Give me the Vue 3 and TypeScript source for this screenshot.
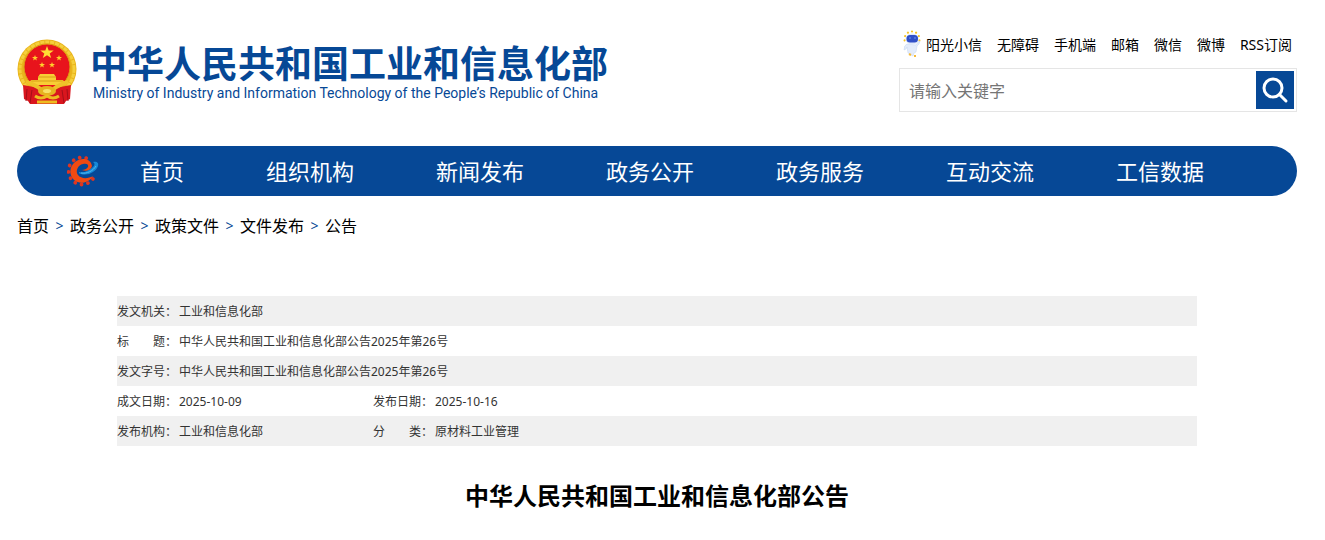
<script setup lang="ts">
import { ref } from 'vue'

interface Field {
  label: string
  value: string
}

const keyword = ref('')
const tools: string[] = ['无障碍', '手机端', '邮箱', '微信', '微博', 'RSS订阅']
const menu: string[] = ['首页', '组织机构', '新闻发布', '政务公开', '政务服务', '互动交流', '工信数据']
const crumbs: string[] = ['首页', '政务公开', '政策文件', '文件发布', '公告']
const rows: Field[][] = [
  [{ label: '发文机关：', value: '工业和信息化部' }],
  [{ label: '标　　题：', value: '中华人民共和国工业和信息化部公告2025年第26号' }],
  [{ label: '发文字号：', value: '中华人民共和国工业和信息化部公告2025年第26号' }],
  [{ label: '成文日期：', value: '2025-10-09' }, { label: '发布日期：', value: '2025-10-16' }],
  [{ label: '发布机构：', value: '工业和信息化部' }, { label: '分　　类：', value: '原材料工业管理' }],
]
const teeth: number[] = [36, 64, 92, 120, 148, 176, 204, 232, 260, 288]
const rays: number[] = [-100, -67, -33, 0, 33, 67, 100]
</script>

<template>
  <div class="page">
    <header class="header">
      <a class="brand" href="#">
        <svg class="emblem" viewBox="0 0 60 66" aria-hidden="true">
          <circle cx="30" cy="30" r="29.5" fill="#e9b41c" />
          <circle cx="30" cy="30" r="27" fill="none" stroke="#f5cf3c" stroke-width="3" stroke-dasharray="4 1" />
          <circle cx="30" cy="28" r="23" fill="#e8141c" stroke="#dda014" stroke-width="1" />
          <path fill="#ffdc34" d="M30 7l1.700 4.500h5l-4 3 1.500 4.500-4.200-2.800-4.200 2.800 1.500-4.500-4-3h5z" />
          <path fill="#ffcf2c" d="M18 16l.8 2h2.200l-1.800 1.400.7 2.200-1.900-1.300-1.900 1.300.7-2.200-1.800-1.400h2.200zM42 16l.8 2H45l-1.800 1.400.7 2.200-1.900-1.300-1.900 1.300.7-2.200-1.800-1.400h2.200zM25 23l.8 2H28l-1.800 1.400.7 2.200-1.900-1.300-1.900 1.300.7-2.200-1.800-1.400h2.200zM35 23l.8 2H38l-1.800 1.400.7 2.200-1.900-1.300-1.900 1.300.7-2.200-1.800-1.400h2.200z" />
          <path fill="#f8cf35" d="M23 35h14l2 3v3h7l3 5H11l3-5h7v-3z" />
          <path d="M21 38h18M14 42h32" stroke="#d99d18" stroke-width="1" />
          <path fill="#d9161e" d="M6 46l16 3 8 8 8-8 16-3-1 14-4 2-2 3H13l-2-3-4-2z" />
          <path d="M10 50l-1 12M15 51l-2 13M45 51l2 13M50 50l1 12" stroke="#a50f18" stroke-width="1" />
          <path fill="none" stroke="#efc129" stroke-width="4" d="M9 43q12 3 21 13 9-10 21-13" />
          <ellipse cx="30" cy="52" rx="9" ry="5" fill="#e6b31f" />
          <ellipse cx="30" cy="52" rx="4" ry="2" fill="#f9e065" />
          <path fill="none" stroke="#edbc20" stroke-width="3" d="M18 57q6 4 12 0 6 4 12 0M20 63h20" />
        </svg>
        <span class="names">
          <span class="name-zh">中华人民共和国工业和信息化部</span>
          <span class="name-en">Ministry of Industry and Information Technology of the People’s Republic of China</span>
        </span>
      </a>

      <div class="side">
        <nav class="tools" aria-label="快捷入口">
          <a class="helper" href="#">
            <svg class="robot" viewBox="0 0 18 28" aria-hidden="true">
              <circle v-for="angle in rays" :key="angle" cx="9" cy="1.500" r="1.100" fill="#f6c52a" :transform="`rotate(${angle} 9 9)`" />
              <path fill="#e3ecfb" stroke="#c3d4f0" stroke-width=".5" d="M4 14Q1 15 1 20l2-1 1-2 1 6 3 2 2 1 1-3 2-1 1-6 2-2 1-3-2 1-2 3z" />
              <ellipse cx="9" cy="9" rx="6.500" ry="5.500" fill="#dfe9fa" />
              <rect x="3.500" y="5" width="11.500" height="7.500" rx="3.500" fill="#304fc7" />
              <path d="M6 8h2M11 8h2" stroke="#6a95f0" stroke-width="1" />
              <path d="M6 24l2 1M11 26h2" stroke="#f5bb3c" stroke-width="2" />
            </svg>
            阳光小信
          </a>
          <a v-for="item in tools" :key="item" href="#">{{ item }}</a>
        </nav>
        <form class="search" role="search" @submit.prevent>
          <input v-model="keyword" type="text" placeholder="请输入关键字" aria-label="请输入关键字" />
          <button type="submit" aria-label="搜索">
            <svg viewBox="0 0 38 38" aria-hidden="true">
              <circle cx="17" cy="17" r="9" fill="none" stroke="#fff" stroke-width="3" />
              <path d="M23.500 23.500L30 30" stroke="#fff" stroke-width="3" stroke-linecap="round" />
            </svg>
          </button>
        </form>
      </div>
    </header>

    <nav class="menu" aria-label="主导航">
      <svg class="gear" viewBox="0 0 32 32" aria-hidden="true">
        <circle v-for="angle in teeth" :key="angle" cx="15" cy="2.500" r="1.900" fill="#df3520" :transform="`rotate(${angle + 90} 15 16)`" />
        <path fill="#f04a12" d="M25 11C24 3 14 2 8 7 2 12 2 20 7 25c6 5 15 3 19-4-5 3-12 3-15-1-3-4 0-10 5-11 3-1 6 0 5 3-1 2-4 3-6 3 5 2 9 0 10-4z" />
        <path fill="#1489d8" d="M12 17c5 1 10-1 14-5 2-2 2-4 0-5 4-1 6 1 5 4-2 6-10 10-17 8-2 0-2-1-2-2z" />
        <path fill="none" stroke="#55b8ed" stroke-width="1" d="M14 18c6 1 12-2 15-7" />
      </svg>
      <a v-for="item in menu" :key="item" href="#">{{ item }}</a>
    </nav>

    <nav class="crumbs" aria-label="当前位置">
      <template v-for="(item, index) in crumbs" :key="item">
        <span v-if="index > 0" class="sep">&gt;</span>
        <a href="#">{{ item }}</a>
      </template>
    </nav>

    <main class="article">
      <table class="meta">
        <colgroup>
          <col class="col-label" />
          <col class="col-value" />
          <col class="col-label" />
          <col />
        </colgroup>
        <tbody>
          <tr v-for="(row, index) in rows" :key="index">
            <template v-for="field in row" :key="field.label">
              <th scope="row">{{ field.label }}</th>
              <td :colspan="row.length === 1 ? 3 : 1">{{ field.value }}</td>
            </template>
          </tr>
        </tbody>
      </table>
      <h1>中华人民共和国工业和信息化部公告</h1>
    </main>
  </div>
</template>

<style>
body {
  margin: 0;
  background: #fff;
}
</style>

<style scoped>
.page {
  padding: 0 28px 24px 17px;
  font-family: "Noto Sans", "Noto Sans CJK SC", sans-serif;
  color: #000;
}

a {
  color: inherit;
  text-decoration: none;
  white-space: nowrap;
}

.header {
  display: flex;
  justify-content: space-between;
  align-items: flex-start;
  padding-top: 30px;
}

.brand {
  display: flex;
  align-items: flex-start;
  gap: 13px;
  padding-top: 9px;
  color: #064896;
}

.emblem {
  width: 60px;
  height: 66px;
}

.names {
  display: flex;
  flex-direction: column;
  padding-top: 2px;
}

.name-zh {
  font-family: "Noto Sans CJK SC", sans-serif;
  font-size: 37px;
  line-height: 42px;
  font-weight: 700;
}

.name-en {
  padding-left: 3px;
  font-family: Roboto, sans-serif;
  font-size: 14px;
  line-height: 20px;
}

.side {
  width: 398px;
}

.tools {
  display: flex;
  align-items: center;
  justify-content: flex-end;
  gap: 15px;
  height: 28px;
  padding-right: 5px;
  font-size: 14px;
}

.helper {
  display: flex;
  align-items: center;
  gap: 5px;
}

.robot {
  width: 18px;
  height: 28px;
}

.search {
  display: flex;
  box-sizing: border-box;
  height: 44px;
  margin-top: 10px;
  padding: 2px;
  border: 1px solid #e5e5e5;
}

.search input {
  flex: 1;
  min-width: 0;
  padding: 2px 7px 0;
  border: 0;
  outline: 0;
  background: transparent;
  font-family: inherit;
  font-size: 16px;
}

.search input::placeholder {
  color: #757575;
}

.search button {
  width: 38px;
  height: 38px;
  padding: 0;
  border: 0;
  background: #064896;
  cursor: pointer;
}

.search svg {
  display: block;
}

.menu {
  display: grid;
  grid-template-columns: 32px 126px repeat(6, 1fr);
  align-items: center;
  height: 50px;
  margin-top: 34px;
  padding: 0 52px 0 50px;
  border-radius: 25px;
  background: #064896;
  color: #fff;
  font-size: 22px;
  line-height: 50px;
  text-align: center;
}

.gear {
  width: 32px;
  height: 32px;
}

.crumbs {
  display: flex;
  align-items: center;
  margin-top: 16px;
  font-size: 16px;
  line-height: 28px;
}

.sep {
  width: 21px;
  color: #064896;
  font-size: 14px;
  text-align: center;
}

.article {
  padding: 0 100px;
}

.meta {
  width: 100%;
  margin-top: 56px;
  border-collapse: collapse;
  table-layout: fixed;
  color: #333;
  font-size: 12px;
  line-height: 28px;
  text-align: left;
}

.meta tr:nth-child(odd) {
  background: #f0f0f0;
}

.meta th,
.meta td {
  padding: 2px 0 0;
  font-weight: 400;
  white-space: nowrap;
}

.col-label {
  width: 62px;
}

.col-value {
  width: 194px;
}

h1 {
  margin: 30px 0 0;
  font-size: 24px;
  line-height: 40px;
  text-align: center;
}
</style>
